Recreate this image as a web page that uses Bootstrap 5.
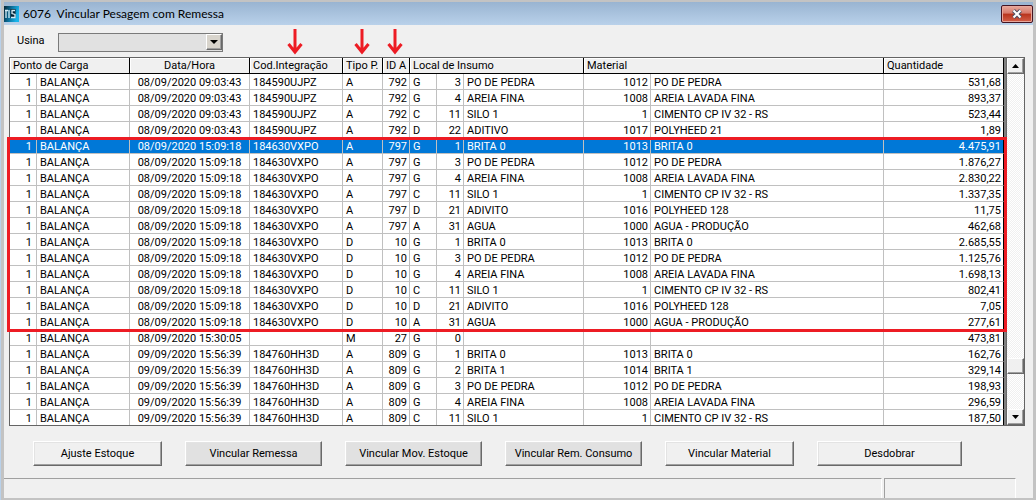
<!DOCTYPE html>
<html lang="pt-BR">
<head>
<meta charset="utf-8">
<meta name="viewport" content="width=device-width, initial-scale=1">
<title>6076 Vincular Pesagem com Remessa</title>
<link href="https://cdn.jsdelivr.net/npm/bootstrap@5.3.0/dist/css/bootstrap.min.css" rel="stylesheet">
<style>
body{font:11px/15px Roboto,"Liberation Sans",sans-serif;color:#000;background:#c0c0c0;border-left:1px solid #b9d1ea}
.win{border:solid #c3c3c3;border-width:2px 3px;background:#f0f0f0}
.titlebar{height:23px;background:linear-gradient(#99b4d1,#b9d1ea);font:12px/16px Lato,"Noto Sans",sans-serif;gap:4px}
.titlebar h1{font:inherit;margin:0;white-space:pre}
.closer{width:32px;height:18px;border:1px solid #431422;border-radius:2px;background:linear-gradient(#e9a99c,#d7796a 45%,#b8331c 50%,#d4604a);box-shadow:inset 0 0 0 1px #e8a79b}
.filter{padding:8px 13px 0;height:32px}
.filter label{width:41px}
.combo{width:165px;height:19px}
.combo select{appearance:none;width:100%;height:100%;border:1px solid #7a7a7a;border-radius:0;background:#e1e1e1;padding:0 18px 0 3px;font:inherit}
.combo .knob{top:1px;right:1px;width:16px;height:16px;pointer-events:none}
.knob,.sbtn{background:#f0f0f0;border:1px solid;border-color:#fff #696969 #696969 #fff;box-shadow:inset -1px -1px 0 #a0a0a0;padding:0;line-height:0}
.combo .knob{background:#d8d4cc}
.pane{margin:0 8px 0 5px;border:1px solid #646464;background:#fff}
.grid-t{table-layout:fixed;width:100%;border-collapse:separate;border-spacing:0}
.grid-t th{position:relative;height:16px;padding:0 3px;font-weight:400;background:#f0f0f0;border-right:1px solid #000;border-bottom:1px solid #000;box-shadow:inset 1px 1px 0 #fff;white-space:nowrap}
.grid-t td{height:16px;line-height:13px;padding:2px 4px 0 3px;border-right:1px solid #c0c0c0;border-bottom:1px solid #c0c0c0;white-space:nowrap}
.grid-t td.num{padding-right:2px;text-align:right}
.grid-t td:first-child{padding-right:4px;text-align:right}
.grid-t td:last-child{border-right-color:#000}
.grid-t tr.sel td{background:#0078d7;color:#fff}
.grid-t tbody:last-child tr:last-child td{border-bottom:0;height:15px}
.boxed{position:relative}
.boxed::after{content:"";position:absolute;inset:-1px -3px -2px;border:3px solid #ed1c24;pointer-events:none}
.arrow{position:absolute;bottom:calc(100% + 3px);left:calc(50% - 9px)}
.gutter{width:3px;background:#808080;border-right:1px solid #696969}
.sbar{width:17px;background:repeating-conic-gradient(#fff 0 25%,#f0f0f0 0 50%) 0 0/2px 2px}
.sbtn{width:17px;height:16px}
.gap-a{flex:283}.gap-b{flex:35}
.actions{display:grid;grid-template-columns:129fr 137fr 137fr 137fr 129fr 145fr;gap:23px;padding:15px 71px 12px 29px}
.act{height:25px;border:1px solid;border-color:#fff #696969 #696969 #fff;box-shadow:inset -1px -1px 0 #a0a0a0,inset 1px 1px 0 #e3e3e3;background:#f0f0f0;padding:0;white-space:nowrap}
.act.dim{background:#e1e1e1}
.status{height:20px;gap:2px;padding-right:17px;flex:1 0 auto}
.status div{border:solid #a0a0a0;border-width:1px 1px 0 0;border-right-color:#fff}
.status .s2{width:132px;border-left:1px solid #a0a0a0}
</style>
</head>
<body>
<div class="win d-flex flex-column min-vh-100">
  <header class="titlebar d-flex align-items-center">
    <svg width="15" height="16" viewBox="0 0 15 16" aria-hidden="true"><defs><linearGradient id="g" x2="1" y2=".3"><stop stop-color="#062434"/><stop offset=".5" stop-color="#0a6f9a"/><stop offset="1" stop-color="#19b4ea"/></linearGradient></defs><path fill="url(#g)" d="M0 0h15v16H0z"/><path d="M6.500 3h5v9h-5z" fill="#062434"/><path d="M1 4.500h3M2 4v8M5 4v8M11 4.500H8v3l3 1v3H7" fill="none" stroke="#d5eef8" stroke-width="1.300"/></svg>
    <h1 class="flex-grow-1">6076  Vincular Pesagem com Remessa</h1>
    <button class="closer p-0 d-flex align-items-center justify-content-center" aria-label="Fechar"><svg width="12" height="10" viewBox="0 0 12 10"><path d="M2.500 1.500l7 7m0-7l-7 7" stroke="#4b4f63" stroke-width="4"/><path d="M2.500 1.500l7 7m0-7l-7 7" stroke="#fff" stroke-width="2"/></svg></button>
  </header>
  <div class="filter d-flex">
    <label for="usina">Usina</label>
    <div class="combo position-relative">
      <select id="usina"><option></option></select>
      <span class="knob position-absolute d-flex align-items-center justify-content-center"><svg width="8" height="4"><path d="M0 0h8L4 4z"/></svg></span>
    </div>
  </div>
  <main class="pane d-flex">
    <table class="grid-t" id="grid">
      <colgroup><col style="width:27px"><col style="width:93px"><col style="width:120px"><col style="width:93px"><col style="width:40px"><col style="width:27px"><col style="width:27px"><col style="width:27px"><col style="width:120px"><col style="width:67px"><col style="width:233px"><col style="width:120px"></colgroup>
      <thead><tr>
        <th colspan="2">Ponto de Carga</th><th class="text-center">Data/Hora</th>
        <th>Cod.Integração<svg class="arrow" width="16" height="26"><path d="M8 0v23M1.500 15L8 23l6.500-8" fill="none" stroke="#ed1c24" stroke-width="3"/></svg></th>
        <th>Tipo P.<svg class="arrow" width="16" height="26"><path d="M8 0v23M1.500 15L8 23l6.500-8" fill="none" stroke="#ed1c24" stroke-width="3"/></svg></th>
        <th class="px-0 text-center">ID A<svg class="arrow" width="16" height="26"><path d="M8 0v23M1.500 15L8 23l6.500-8" fill="none" stroke="#ed1c24" stroke-width="3"/></svg></th>
        <th colspan="3">Local de Insumo</th><th colspan="2">Material</th><th>Quantidade</th>
      </tr></thead>
    </table>
    <div class="gutter flex-shrink-0"></div>
    <div class="sbar flex-shrink-0 d-flex flex-column">
      <button class="sbtn d-flex align-items-center justify-content-center" aria-label="Rolar para cima"><svg width="7" height="4"><path d="M0 4h7L3.500 0z"/></svg></button>
      <div class="gap-a"></div><div class="sbtn"></div><div class="gap-b"></div>
      <button class="sbtn d-flex align-items-center justify-content-center" aria-label="Rolar para baixo"><svg width="7" height="4"><path d="M0 0h7L3.500 4z"/></svg></button>
    </div>
  </main>
  <div class="actions">
    <button class="act">Ajuste Estoque</button><button class="act dim">Vincular Remessa</button><button class="act dim">Vincular Mov. Estoque</button><button class="act dim">Vincular Rem. Consumo</button><button class="act">Vincular Material</button><button class="act">Desdobrar</button>
  </div>
  <footer class="status d-flex"><div class="flex-grow-1"></div><div class="s2"></div></footer>
</div>
<script src="https://cdn.jsdelivr.net/npm/bootstrap@5.3.0/dist/js/bootstrap.bundle.min.js"></script>
<script>
// One array per weighing batch: date, integration code, then its lines
const d1 = "08/09/2020 09:03:43|184590UJPZ|", d2 = "08/09/2020 15:09:18|184630VXPO|", d4 = "09/09/2020 15:56:39|184760HH3D|";
const groups = [
  [d1+"A|792|G|3|PO DE PEDRA|1012|PO DE PEDRA|531,68",
   d1+"A|792|G|4|AREIA FINA|1008|AREIA LAVADA FINA|893,37",
   d1+"A|792|C|11|SILO 1|1|CIMENTO CP IV 32 - RS|523,44",
   d1+"A|792|D|22|ADITIVO|1017|POLYHEED 21|1,89"],
  [d2+"A|797|G|1|BRITA 0|1013|BRITA 0|4.475,91",
   d2+"A|797|G|3|PO DE PEDRA|1012|PO DE PEDRA|1.876,27",
   d2+"A|797|G|4|AREIA FINA|1008|AREIA LAVADA FINA|2.830,22",
   d2+"A|797|C|11|SILO 1|1|CIMENTO CP IV 32 - RS|1.337,35",
   d2+"A|797|D|21|ADIVITO|1016|POLYHEED 128|11,75",
   d2+"A|797|A|31|AGUA|1000|AGUA - PRODUÇÃO|462,68",
   d2+"D|10|G|1|BRITA 0|1013|BRITA 0|2.685,55",
   d2+"D|10|G|3|PO DE PEDRA|1012|PO DE PEDRA|1.125,76",
   d2+"D|10|G|4|AREIA FINA|1008|AREIA LAVADA FINA|1.698,13",
   d2+"D|10|C|11|SILO 1|1|CIMENTO CP IV 32 - RS|802,41",
   d2+"D|10|D|21|ADIVITO|1016|POLYHEED 128|7,05",
   d2+"D|10|A|31|AGUA|1000|AGUA - PRODUÇÃO|277,61"],
  ["08/09/2020 15:30:05||M|27|G|0||||473,81",
   d4+"A|809|G|1|BRITA 0|1013|BRITA 0|162,76",
   d4+"A|809|G|2|BRITA 1|1014|BRITA 1|329,14",
   d4+"A|809|G|3|PO DE PEDRA|1012|PO DE PEDRA|198,93",
   d4+"A|809|G|4|AREIA FINA|1008|AREIA LAVADA FINA|296,59",
   d4+"A|809|C|11|SILO 1|1|CIMENTO CP IV 32 - RS|187,50"]
];
const cls = {2:"text-center px-0", 5:"num", 7:"num", 9:"num", 11:"num"};
document.getElementById("grid").insertAdjacentHTML("beforeend", groups.map((g, i) =>
  `<tbody class="${i === 1 ? "boxed" : ""}">` + g.map((r, j) =>
    `<tr class="${i === 1 && j === 0 ? "sel" : ""}">` +
    ["1", "BALANÇA", ...r.split("|")].map((v, k) => `<td class="${cls[k] || ""}">${v}</td>`).join("") + "</tr>"
  ).join("") + "</tbody>").join(""));
</script>
</body>
</html>
